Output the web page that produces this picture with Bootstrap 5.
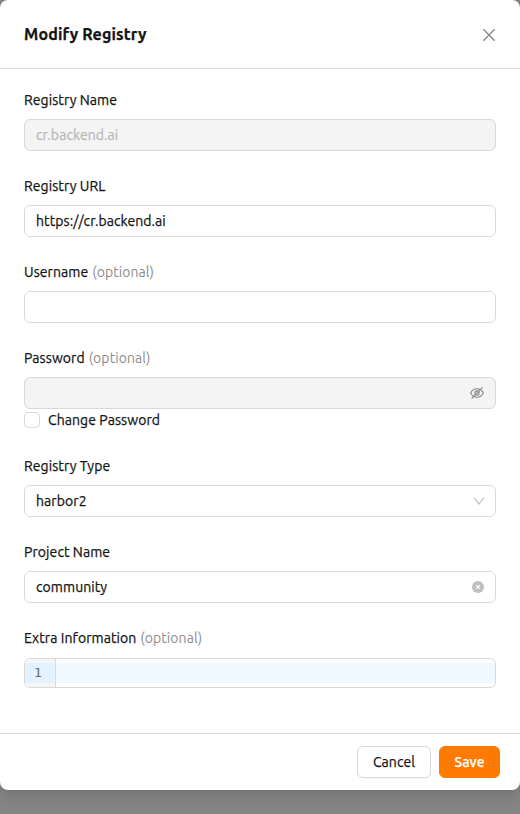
<!DOCTYPE html>
<html lang="en">
<head>
<meta charset="utf-8">
<meta name="viewport" content="width=device-width, initial-scale=1">
<title>Modify Registry</title>
<link href="https://cdn.jsdelivr.net/npm/bootstrap@5.3.0/dist/css/bootstrap.min.css" rel="stylesheet">
<style>
body{background:#888;font-family:Ubuntu,"Noto Sans",sans-serif;font-size:14px;line-height:22px;letter-spacing:.08px;color:#141414;height:814px;overflow:hidden;-webkit-text-stroke:.25px}
.dialog{height:790px;border-radius:8px;box-shadow:0 6px 16px rgba(0,0,0,.08),0 3px 6px -4px rgba(0,0,0,.12),0 9px 28px 8px rgba(0,0,0,.05)}
.dialog-head{height:69px;border-bottom:1px solid #d9d9d9}
.dialog-title{font-size:16px;font-weight:700;line-height:24px;letter-spacing:.15px}
.dialog-body{padding:20px 24px 0}
.dialog-foot{height:57px;border-top:1px solid #d9d9d9;padding:12px 20px}
.dismiss{padding:2px 0 0}
.field{margin-bottom:24px}
.field .form-label{margin-bottom:8px;display:block;line-height:22px}
.opt{color:#8c8c8c;margin-left:.6px;-webkit-text-stroke:0}
.box{height:32px;border:1px solid #d9d9d9;border-radius:6px;padding:0 11px;background:#fff}
.box.off{background:#f4f4f4;color:#b8b8b8}
.box.pick{padding-right:10px}
.box input{font:inherit;color:inherit;min-width:0;outline:0;padding:0}
.form-check-input.tick{width:16px;height:16px;border:1px solid #d9d9d9;border-radius:4px;margin:0}
.editor{height:30px;margin-top:9px;border:1px solid #d9d9d9;border-radius:6px}
.gutter{width:31px;border-right:1px solid #d9d9d9;background:#f5f5f5;padding:4px 0}
.gutter span{display:block;height:20px;line-height:19px;background:#e2f2ff;color:#6c6c6c;font-family:"DejaVu Sans Mono",monospace;font-size:13px;-webkit-text-stroke:0;padding-left:9px}
.code{padding:4px 0}
.code div{height:20px;background:#f0f9ff}
.btn.act{height:32px;border-radius:6px;padding:0;font-size:14px;line-height:30px;letter-spacing:.08px;box-shadow:0 2px 0 rgba(0,0,0,.02)}
.act.cancel{width:74px;border:1px solid #d9d9d9;background:#fff;color:#141414}
.act.save{width:61px;border:1px solid #ff7a00;background:#ff7a00;color:#fff;font-weight:500}
svg{display:block;flex:none}
</style>
<script src="https://cdn.jsdelivr.net/npm/bootstrap@5.3.0/dist/js/bootstrap.bundle.min.js"></script>
</head>
<body>
<div class="dialog bg-white d-flex flex-column">
  <div class="dialog-head d-flex align-items-center justify-content-between px-4">
    <h1 class="dialog-title mb-0">Modify Registry</h1>
    <button type="button" class="dismiss border-0 bg-transparent" aria-label="Close">
      <svg width="14" height="14" viewBox="0 0 14 14" fill="none" stroke="#858585" stroke-width="1.3"><path d="M1.300 1.300l11.400 11.400M12.700 1.300L1.300 12.700"/></svg>
    </button>
  </div>
  <div class="dialog-body flex-grow-1">
    <div class="field"><label class="form-label">Registry Name</label>
      <div class="box off d-flex align-items-center">cr.backend.ai</div></div>
    <div class="field"><label class="form-label">Registry URL</label>
      <div class="box d-flex align-items-center">https://cr.backend.ai</div></div>
    <div class="field"><label class="form-label">Username <span class="opt">(optional)</span></label>
      <div class="box d-flex align-items-center"><input class="border-0 bg-transparent flex-grow-1" type="text" aria-label="Username"></div></div>
    <div class="field"><label class="form-label">Password <span class="opt">(optional)</span></label>
      <div class="box off d-flex align-items-center justify-content-end">
        <svg width="14" height="14" viewBox="0 0 14 14" fill="none" stroke="#858585" stroke-width="1.1"><path d="M.6 7Q2.8 2.7 7 2.7T13.400 7Q11.200 11.300 7 11.300T.6 7z"/><circle cx="7" cy="7" r="2.100"/><path d="M12.600 1.300L1.600 12.700"/></svg>
      </div>
      <div class="d-flex align-items-center gap-2"><input class="form-check-input tick" type="checkbox" id="chg"><label for="chg">Change Password</label></div></div>
    <div class="field"><label class="form-label">Registry Type</label>
      <div class="box pick d-flex align-items-center justify-content-between"><span>harbor2</span>
        <svg width="12" height="12" viewBox="0 0 12 12" fill="none" stroke="#bdbdbd" stroke-width="1.100"><path d="M1.200 2.800L6 9l4.800-6.200"/></svg></div></div>
    <div class="field"><label class="form-label">Project Name</label>
      <div class="box d-flex align-items-center justify-content-between"><span>community</span>
        <svg width="12" height="12" viewBox="0 0 12 12"><circle cx="6" cy="6" r="6" fill="#bfbfbf"/><path d="M4.100 4.100l3.800 3.800M7.900 4.100L4.100 7.900" stroke="#fff" stroke-width="1.200"/></svg></div></div>
    <div><label class="form-label mb-0">Extra Information <span class="opt">(optional)</span></label>
      <div class="editor d-flex overflow-hidden"><div class="gutter"><span>1</span></div><div class="code flex-grow-1"><div></div></div></div></div>
  </div>
  <div class="dialog-foot d-flex justify-content-end gap-2">
    <button type="button" class="btn act cancel">Cancel</button>
    <button type="button" class="btn act save">Save</button>
  </div>
</div>
</body>
</html>
